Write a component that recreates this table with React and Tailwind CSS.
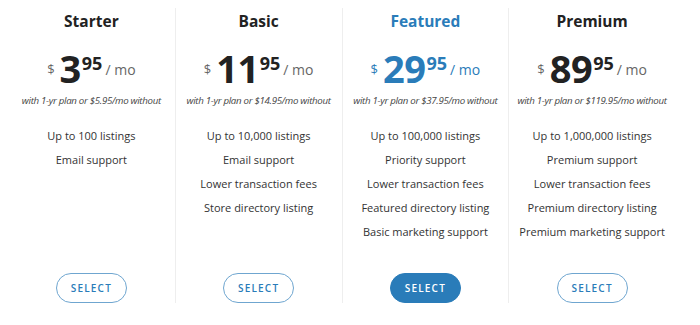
const plans = [
  {
    name: "Starter",
    dollars: "3",
    cents: "95",
    note: "with 1-yr plan or $5.95/mo without",
    features: ["Up to 100 listings", "Email support"],
  },
  {
    name: "Basic",
    dollars: "11",
    cents: "95",
    note: "with 1-yr plan or $14.95/mo without",
    features: ["Up to 10,000 listings", "Email support", "Lower transaction fees", "Store directory listing"],
  },
  {
    name: "Featured",
    dollars: "29",
    cents: "95",
    note: "with 1-yr plan or $37.95/mo without",
    featured: true,
    features: [
      "Up to 100,000 listings",
      "Priority support",
      "Lower transaction fees",
      "Featured directory listing",
      "Basic marketing support",
    ],
  },
  {
    name: "Premium",
    dollars: "89",
    cents: "95",
    note: "with 1-yr plan or $119.95/mo without",
    features: [
      "Up to 1,000,000 listings",
      "Premium support",
      "Lower transaction fees",
      "Premium directory listing",
      "Premium marketing support",
    ],
  },
];

function PlanColumn({ plan, first }) {
  const accent = plan.featured ? "text-[#2a7cb9]" : "text-[#222]";
  const soft = plan.featured ? "" : "text-[#666]";
  return (
    <div
      className={
        "flex flex-col items-center h-[295px] " + (first ? "" : "border-l border-[#eeeeee]")
      }
    >
      <h2 className={"mt-[1px] text-[15.5px] leading-[24px] font-bold " + accent}>{plan.name}</h2>
      <div className={"mt-[15px] flex items-start h-[40px] " + accent}>
        <span className={"text-[13px] leading-[16px] mt-[13px] mr-[5px] " + soft}>$</span>
        <span className="text-[38px] leading-[40px] font-bold tracking-[-0.5px]">{plan.dollars}</span>
        <span className="text-[18px] leading-[20px] font-bold mt-[5px] ml-[1px]">{plan.cents}</span>
        <span className={"text-[14px] leading-[20px] mt-[12px] ml-[3px] " + soft}>/ mo</span>
      </div>
      <p className="mt-[6px] text-[9.7px] leading-[14px] italic text-[#444] tracking-[-0.3px]">{plan.note}</p>
      <ul className="mt-[19px] flex flex-col items-center gap-[7px] text-[11px] leading-[17px] text-[#333]">
        {plan.features.map((f) => (
          <li key={f}>{f}</li>
        ))}
      </ul>
      <button
        className={
          "mt-auto w-[71px] h-[30px] rounded-full text-[10px] font-semibold tracking-[1.2px] " +
          (plan.featured
            ? "bg-[#2a7cb9] text-white border border-[#2a7cb9]"
            : "bg-white text-[#2a7cb9] border border-[#6fa6d0]")
        }
      >
        SELECT
      </button>
    </div>
  );
}

export default function App() {
  return (
    <div className="w-[700px] h-[325px] bg-white" style={{ fontFamily: "'Open Sans', sans-serif" }}>
      <div className="ml-[8px] pt-[8px] w-[667px] grid grid-cols-4">
        {plans.map((p, i) => (
          <PlanColumn key={p.name} plan={p} first={i === 0} />
        ))}
      </div>
    </div>
  );
}
